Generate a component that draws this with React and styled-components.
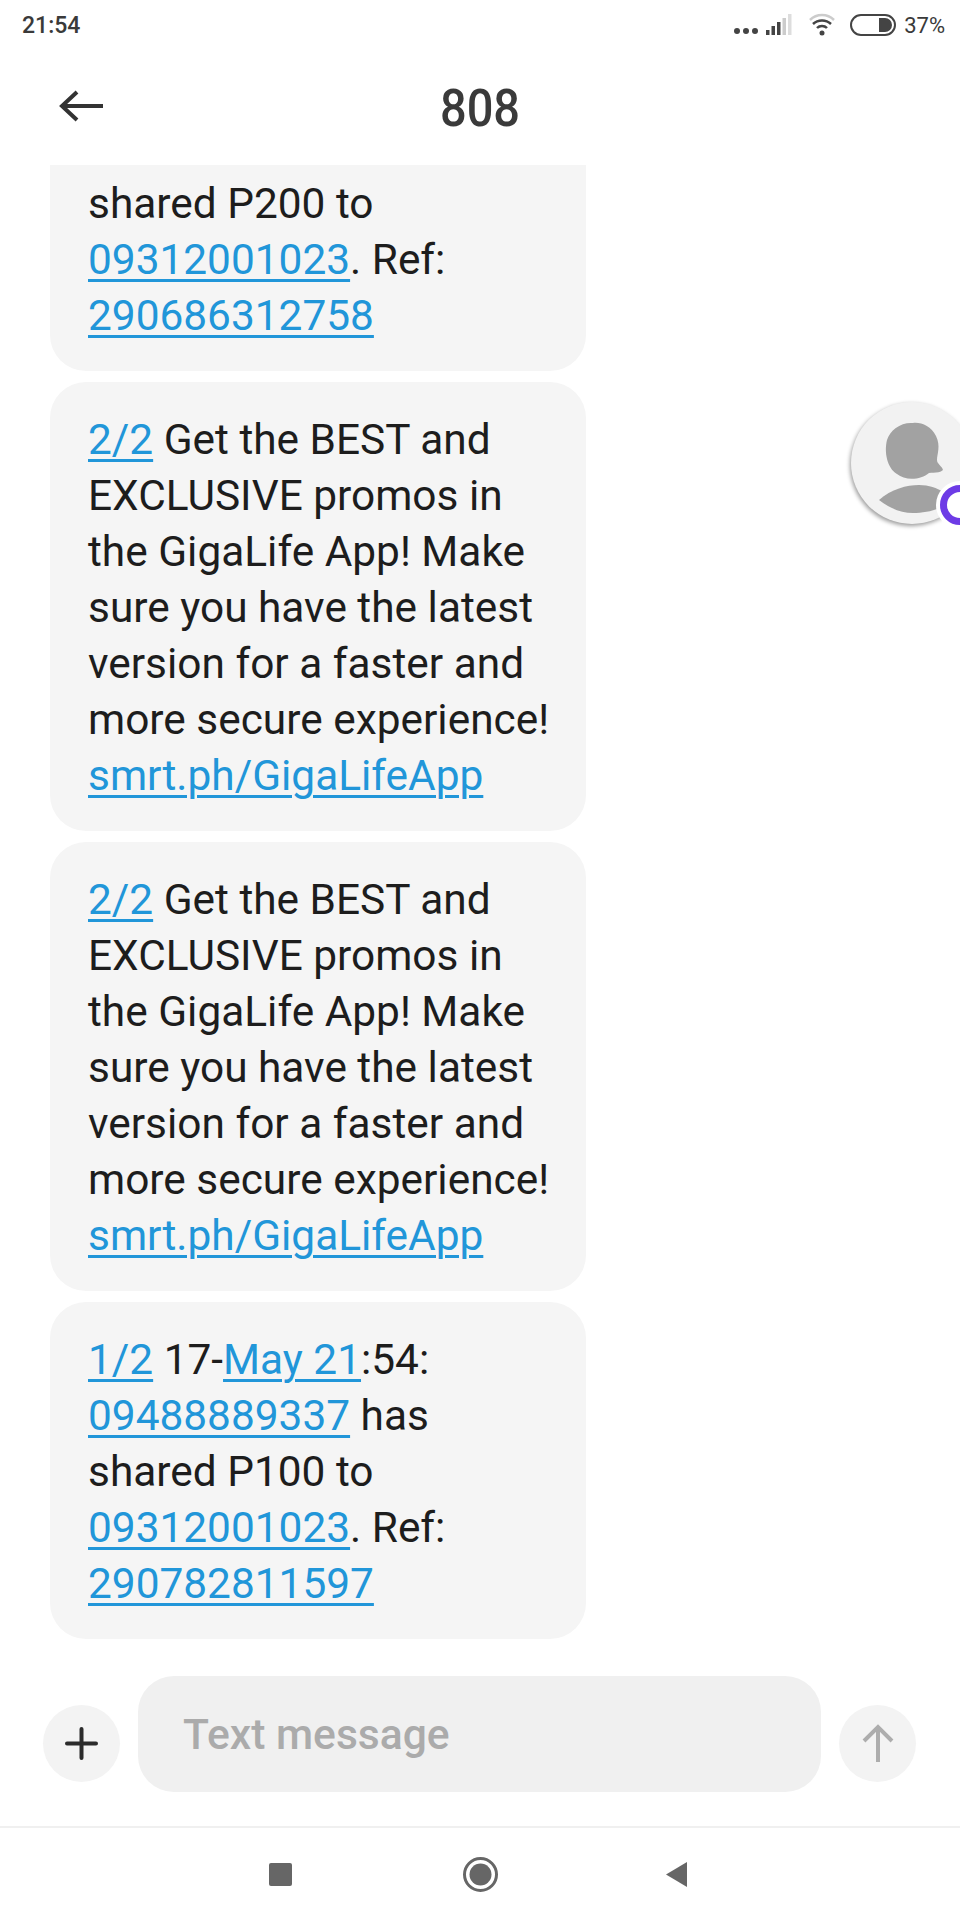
import React from "react";
import styled, { createGlobalStyle } from "styled-components";

const GlobalStyle = createGlobalStyle`
    html, body {
        margin: 0;
        padding: 0;
        background: #fff;
    }
    body {
        font-family: Roboto, "Liberation Sans", sans-serif;
    }
`;

const Screen = styled.div`
    position: relative;
    width: 960px;
    height: 1920px;
    display: flex;
    flex-direction: column;
    overflow: hidden;
    background: #fff;
`;

const StatusBar = styled.div`
    height: 50px;
    padding: 0 15px 0 22px;
    display: flex;
    align-items: center;
    justify-content: space-between;
    color: #3a3a3a;
`;

const Clock = styled.span`
    font-size: 23px;
    font-weight: 500;
`;

const StatusIcons = styled.div`
    display: flex;
    align-items: center;
    gap: 15px;
`;

const BatteryText = styled.span`
    font-size: 22px;
    margin-left: -7px;
`;

const TitleBar = styled.div`
    position: relative;
    height: 115px;
    flex: none;
    display: flex;
    align-items: center;
    justify-content: center;
    box-sizing: border-box;
`;

const BackButton = styled.div`
    position: absolute;
    left: 58px;
    top: 38px;
    display: flex;
`;

const Title = styled.h1`
    margin: 0;
    font-size: 47px;
    font-weight: 500;
    color: #3a3a3a;
    transform: scaleY(1.1);
`;

const Messages = styled.div`
    flex: 1;
    min-height: 0;
    display: flex;
    flex-direction: column;
    justify-content: flex-end;
    gap: 11px;
    padding: 0 0 37px 50px;
    overflow: hidden;
`;

const Bubble = styled.div`
    flex: none;
    width: 536px;
    box-sizing: border-box;
    padding: ${(props) => (props.$clipped ? "120px" : "30px")} 20px 27px 38px;
    background: #f5f5f5;
    border-radius: 36px;
    font-size: 42.4px;
    line-height: 56px;
    color: #1d1d1d;
    white-space: pre-line;
`;

const Link = styled.span`
    color: #2196d9;
    text-decoration: underline;
    text-decoration-thickness: 3px;
    text-underline-offset: 5px;
`;

const Composer = styled.div`
    height: 116px;
    flex: none;
    display: flex;
    align-items: center;
    padding: 0 44px 0 43px;
    gap: 18px;
`;

const RoundButton = styled.div`
    width: 77px;
    height: 77px;
    margin-top: 18px;
    flex: none;
    border-radius: 50%;
    background: #f3f3f3;
    display: flex;
    align-items: center;
    justify-content: center;
`;

const InputBox = styled.div`
    flex: 1;
    height: 116px;
    box-sizing: border-box;
    padding: 0 45px 0 45px;
    border-radius: 36px;
    background: #f0f0f0;
    display: flex;
    align-items: center;
    font-size: 42.6px;
    font-weight: 500;
    color: #ababab;
`;

const NavBar = styled.div`
    margin-top: 34px;
    height: 92px;
    flex: none;
    box-sizing: content-box;
    border-top: 2px solid #f0f0f0;
    padding-left: 180px;
    display: grid;
    grid-template-columns: 200px 200px 192px;
    justify-items: center;
    align-items: center;
`;

const ChatHead = styled.div`
    position: absolute;
    left: 851px;
    top: 402px;
    width: 122px;
    height: 122px;
    border-radius: 50%;
    background: #f2f2f2;
    box-shadow: -1px 2px 4px rgba(0, 0, 0, 0.4);
`;

const ChatBadge = styled.div`
    position: absolute;
    left: 85px;
    top: 79px;
    width: 48px;
    height: 48px;
    border-radius: 50%;
    background: #fff;
    display: flex;
    align-items: center;
    justify-content: center;
`;

const BadgeRing = styled.div`
    width: 40px;
    height: 40px;
    box-sizing: border-box;
    border-radius: 50%;
    border: 7px solid #6d3be6;
`;

const SignalIcon = () => (
    <svg width="60" height="24" viewBox="0 0 60 24">
        <circle cx="3" cy="18" r="3" fill="#444" />
        <circle cx="12" cy="18" r="3" fill="#444" />
        <circle cx="21" cy="18" r="3" fill="#444" />
        <rect x="32" y="17" width="3.5" height="5" fill="#444" />
        <rect x="37.5" y="13" width="3.5" height="9" fill="#444" />
        <rect x="43" y="9" width="3.5" height="13" fill="#444" />
        <rect x="48.5" y="5" width="3.5" height="17" fill="#ccc" />
        <rect x="54" y="1" width="3.5" height="21" fill="#ddd" />
    </svg>
);

const WifiIcon = () => (
    <svg width="26" height="24" viewBox="0 0 26 24" fill="none">
        <path d="M1 7 A17 17 0 0 1 25 7" stroke="#ccc" strokeWidth="2.5" />
        <path d="M4 11 A13 13 0 0 1 22 11" stroke="#444" strokeWidth="2.5" />
        <path d="M8 15 A7 7 0 0 1 18 15" stroke="#444" strokeWidth="2.5" />
        <circle cx="13" cy="20" r="2.5" fill="#444" />
    </svg>
);

const BatteryIcon = () => (
    <svg width="46" height="22" viewBox="0 0 46 22" fill="none">
        <rect x="1" y="1" width="44" height="20" rx="10" stroke="#444" strokeWidth="2" />
        <path d="M29 4 H35 A7 7 0 0 1 35 18 H29 Z" fill="#444" />
    </svg>
);

const BackArrow = () => (
    <svg width="46" height="36" viewBox="0 0 46 36" fill="none" stroke="#333" strokeWidth="4">
        <path d="M45 18 H4" />
        <path d="M19 4 L4 18 L19 32" />
    </svg>
);

const PlusIcon = () => (
    <svg width="33" height="33" viewBox="0 0 33 33" stroke="#2b2b2b" strokeWidth="4" strokeLinecap="round">
        <path d="M16.5 2 V31 M2 16.5 H31" />
    </svg>
);

const SendArrow = () => (
    <svg width="34" height="38" viewBox="0 0 34 38" fill="none" stroke="#adadad" strokeWidth="4">
        <path d="M17 38 V3" />
        <path d="M3 17 L17 3 L31 17" />
    </svg>
);

const AvatarIcon = () => (
    <svg width="122" height="122" viewBox="0 0 122 122">
        <path d="M62 21 C70 20 80 24 85 34 C90 44 86 52 86 58 C86 62 91 64 92 68 C88 72 82 70 78 71 C70 78 54 79 46 72 C36 66 33 50 36 38 C39 28 50 20 62 21 Z" fill="#a2a2a2" />
        <path d="M28 98 C40 87 56 83 68 83 C78 83 86 86 92 90 L92 104 C84 109 72 111 62 111 C50 111 38 106 28 98 Z" fill="#a2a2a2" />
    </svg>
);

const NavSquare = () => (
    <svg width="23" height="23" viewBox="0 0 23 23">
        <rect width="23" height="23" rx="2" fill="#666" />
    </svg>
);

const NavCircle = () => (
    <svg width="35" height="35" viewBox="0 0 35 35">
        <circle cx="17.5" cy="17.5" r="16" fill="none" stroke="#666" strokeWidth="3" />
        <circle cx="17.5" cy="17.5" r="11" fill="#666" />
    </svg>
);

const NavBack = () => (
    <svg width="21" height="25" viewBox="0 0 21 25">
        <path d="M21 0 V25 L0 12.5 Z" fill="#666" />
    </svg>
);

const PromoText = () => (
    <>
        <Link>2/2</Link>{" Get the BEST and\nEXCLUSIVE promos in\nthe GigaLife App! Make\nsure you have the latest\nversion for a faster and\nmore secure experience!\n"}
        <Link>smrt.ph/GigaLifeApp</Link>
    </>
);

const App = () => {
    return (
        <Screen>
            <GlobalStyle />
            <StatusBar>
                <Clock>21:54</Clock>
                <StatusIcons>
                    <SignalIcon />
                    <WifiIcon />
                    <BatteryIcon />
                    <BatteryText>37%</BatteryText>
                </StatusIcons>
            </StatusBar>
            <TitleBar>
                <BackButton><BackArrow /></BackButton>
                <Title>808</Title>
            </TitleBar>
            <Messages>
                <Bubble $clipped>
                    {"shared P200 to\n"}
                    <Link>09312001023</Link>{". Ref:\n"}
                    <Link>290686312758</Link>
                </Bubble>
                <Bubble><PromoText /></Bubble>
                <Bubble><PromoText /></Bubble>
                <Bubble>
                    <Link>1/2</Link>{" 17-"}<Link>May 21</Link>{":54:\n"}
                    <Link>09488889337</Link>{" has\nshared P100 to\n"}
                    <Link>09312001023</Link>{". Ref:\n"}
                    <Link>290782811597</Link>
                </Bubble>
            </Messages>
            <Composer>
                <RoundButton><PlusIcon /></RoundButton>
                <InputBox>Text message</InputBox>
                <RoundButton><SendArrow /></RoundButton>
            </Composer>
            <NavBar>
                <NavSquare />
                <NavCircle />
                <NavBack />
            </NavBar>
            <ChatHead>
                <AvatarIcon />
                <ChatBadge><BadgeRing /></ChatBadge>
            </ChatHead>
        </Screen>
    );
};

export default App;
